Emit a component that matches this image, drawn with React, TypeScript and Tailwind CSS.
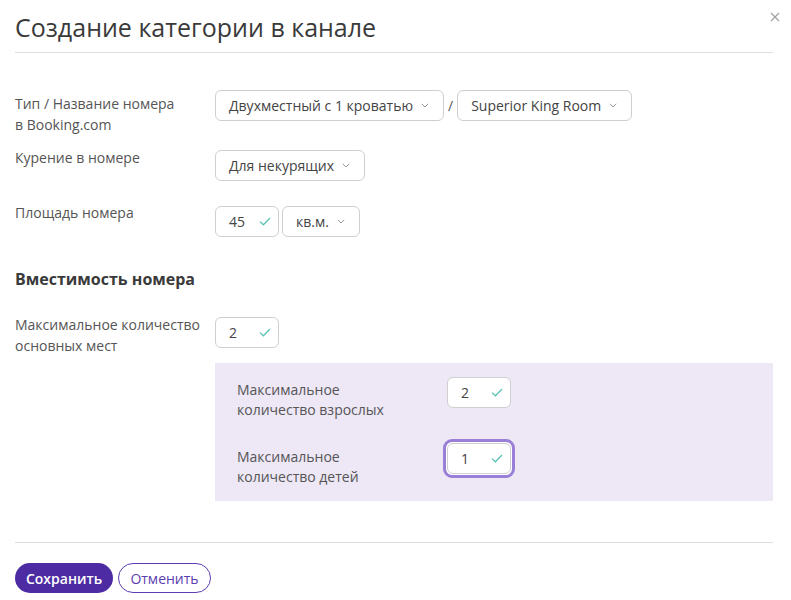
import { ReactNode } from "react";

function Chevron() {
  return (
    <svg width="8" height="5" viewBox="0 0 8 5" className="ml-2 shrink-0">
      <path d="M0.8 0.8l3.2 3.2L7.2 0.8" fill="none" stroke="#999" strokeWidth="1" />
    </svg>
  );
}

function Check() {
  return (
    <svg width="12" height="9" viewBox="0 0 12 9" className="shrink-0">
      <path d="M1 4.6l3.4 3.2L11 1" fill="none" stroke="#5cc2b4" strokeWidth="1.3" />
    </svg>
  );
}

function Select({ value, width }: { value: string; width: string }) {
  return (
    <div className={`${width} h-[31px] flex items-center justify-between pl-[13px] pr-[17px] bg-white border border-[#cfcfcf] rounded-[6px] text-[14px] text-[#444]`}>
      <span className="whitespace-nowrap">{value}</span>
      <Chevron />
    </div>
  );
}

function NumInput({ value, focused }: { value: string; focused?: boolean }) {
  const box = (
    <div className="w-[64px] h-[31px] flex items-center justify-between pl-[13px] pr-[7px] bg-white border border-[#cfcfcf] rounded-[6px] text-[14px] text-[#444]">
      <span>{value}</span>
      <Check />
    </div>
  );
  if (!focused) return box;
  return (
    <div className="border-[3px] border-[#9a7fd8] rounded-[9px] p-[1px] -ml-[4px] bg-white">{box}</div>
  );
}

function Row({ label, children, className, labelPad }: { label: ReactNode; children: ReactNode; className?: string; labelPad?: string }) {
  return (
    <div className={`flex items-start ${className ?? ""}`}>
      <div className={`w-[200px] text-[14px] leading-[21px] text-[#555] ${labelPad ?? ""}`}>{label}</div>
      {children}
    </div>
  );
}

export default function App() {
  return (
    <div className="w-[791px] h-[600px] bg-white relative" style={{ fontFamily: '"Open Sans", "Noto Sans", sans-serif' }}>
      <button className="absolute right-[11px] top-[12px]">
        <svg width="10" height="10" viewBox="0 0 10 10">
          <path d="M1 1l8 8M9 1l-8 8" stroke="#a0a0a0" strokeWidth="1.2" />
        </svg>
      </button>
      <div className="pl-[15px] pr-[18px]">
        <h1 className="pt-[10px] text-[25px] leading-[34px] text-[#3a3a3a] font-normal">Создание категории в канале</h1>
        <div className="mt-[8px] border-t border-[#dedede]" />

        <Row label={<>Тип / Название номера<br />в Booking.com</>} className="mt-[37px]" labelPad="pt-[3px]">
          <div className="flex items-center">
            <Select value="Двухместный с 1 кроватью" width="w-[229px]" />
            <span className="mx-[4px] text-[14px] text-[#555]">/</span>
            <Select value="Superior King Room" width="w-[175px]" />
          </div>
        </Row>

        <Row label="Курение в номере" className="mt-[12px]">
          <div className="mt-[3px]">
            <Select value="Для некурящих" width="w-[150px]" />
          </div>
        </Row>

        <Row label="Площадь номера" className="mt-[21px]">
          <div className="mt-[4px] flex items-center gap-[3px]">
            <NumInput value="45" />
            <Select value="кв.м." width="w-[78px]" />
          </div>
        </Row>

        <h2 className="mt-[31px] text-[16px] leading-[22px] font-bold text-[#3a3a3a]">Вместимость номера</h2>

        <Row label={<>Максимальное количество<br />основных мест</>} className="mt-[24px]">
          <div className="mt-[3px]">
            <NumInput value="2" />
          </div>
        </Row>

        <div className="ml-[200px] mt-[7px] bg-[#ede7f6] pl-[22px] pt-[14px] pb-[14px]">
          <div className="flex items-start">
            <div className="w-[210px] pt-[3px] text-[14px] leading-[20px] text-[#555]">Максимальное<br />количество взрослых</div>
            <NumInput value="2" />
          </div>
          <div className="flex items-start mt-[19px]">
            <div className="w-[210px] pt-[8px] text-[14px] leading-[20px] text-[#555]">Максимальное<br />количество детей</div>
            <NumInput value="1" focused />
          </div>
        </div>

        <div className="mt-[41px] border-t border-[#dedede]" />

        <div className="mt-[20px] flex gap-[5px]">
          <button className="h-[30px] w-[98px] rounded-full bg-[#4d2ca3] text-white text-[14px] font-semibold">Сохранить</button>
          <button className="h-[30px] w-[93px] rounded-full border border-[#5b3db0] text-[#5b3db0] text-[14px] bg-white">Отменить</button>
        </div>
      </div>
    </div>
  );
}
